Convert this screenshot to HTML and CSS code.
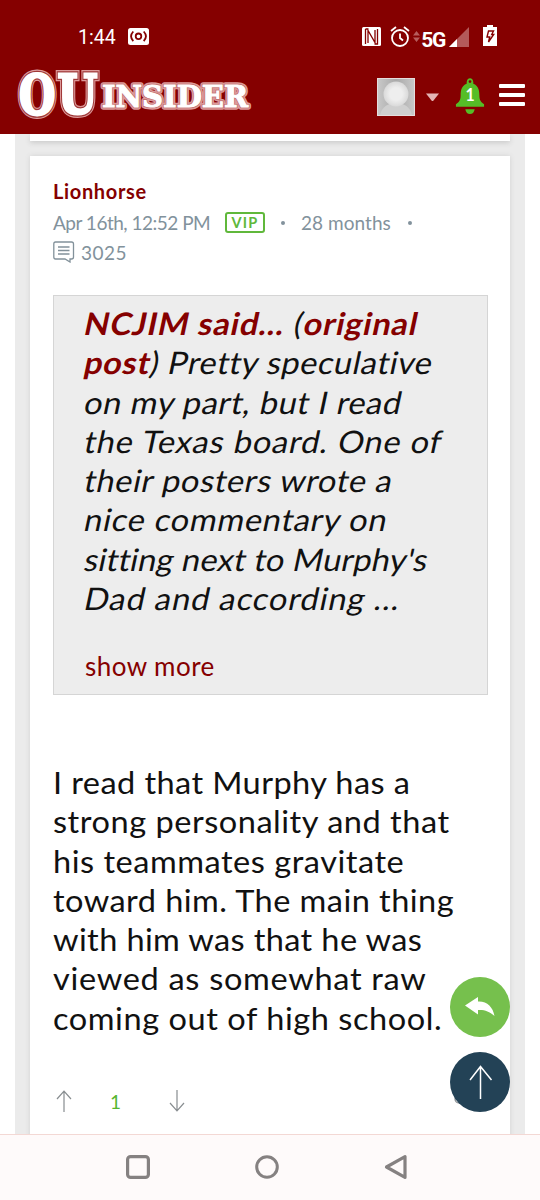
FILE: index.html
```html
<!DOCTYPE html>
<html lang="en">
<head>
<meta charset="utf-8">
<title>OU Insider</title>
<link rel="stylesheet" href="styles.css">
</head>
<body>
<header class="top">
  <div class="status">
    <span class="clock">1:44</span>
    <svg class="rec" width="21" height="17" viewBox="0 0 21 17"><rect width="21" height="17" rx="2.5" fill="#fff"/><g fill="none" stroke="#850000" stroke-width="1.8"><circle cx="10.500" cy="8.300" r="2.800"/><path d="M5.300 3.500Q.8 8.300 5.300 13.100M15.700 3.500Q20.200 8.300 15.700 13.100"/></g></svg>
    <svg class="nfc" width="19" height="19" viewBox="0 0 19 19"><rect width="19" height="19" rx="1.500" fill="#fff"/><path d="M3.500 2V17M6 16V3.500L13 15.500V3M3.500 2H6.500M12.500 17H15.500V2" fill="none" stroke="#850000" stroke-width="1.300"/></svg>
    <svg class="alarm" width="20" height="21" viewBox="0 0 20 21"><g fill="none" stroke="#fff" stroke-width="1.8"><circle cx="10" cy="12" r="8"/><path d="M1 5l5-4M19 5l-5-4M10 7.500V12l3 2.500"/></g></svg>
    <svg class="data" width="7" height="11" viewBox="0 0 7 11"><path d="M0 4.500L3.500 0 7 4.500zM0 6.500h7L3.500 11z" fill="#b65c5c"/></svg>
    <span class="net">5G</span>
    <svg class="signal" width="20" height="20" viewBox="0 0 20 20"><path d="M0 20L20 0V20z" fill="#b45a5a"/><path d="M0 20L8 12V20z" fill="#fff"/></svg>
    <svg class="battery" width="14" height="21" viewBox="0 0 14 21"><path d="M4 0h6v2h4v19H0V2h4z" fill="#fff"/><path d="M5.500 6h5L8.700 9.500h2L5.500 17l1.200-5H4z" fill="none" stroke="#850000" stroke-width="1.400"/></svg>
  </div>
  <div class="bar">
    <svg class="logo" width="236" height="54" viewBox="0 0 236 54">
      <g class="halo"><text class="big" transform="translate(3 48) scale(.76 1)">O</text><text class="big" transform="translate(41.500 48) scale(.83 1)">U</text><text class="small" x="86" y="40.500" textLength="146" lengthAdjust="spacing">INSIDER</text></g>
      <g class="groove" aria-hidden="true"><text class="big" transform="translate(3 48) scale(.76 1)">O</text><text class="big" transform="translate(41.500 48) scale(.83 1)">U</text><text class="small" x="86" y="40.500" textLength="146" lengthAdjust="spacing">INSIDER</text></g>
      <g class="face" aria-hidden="true"><text class="big" transform="translate(3 48) scale(.76 1)">O</text><text class="big" transform="translate(41.500 48) scale(.83 1)">U</text><text class="small" x="86" y="40.500" textLength="146" lengthAdjust="spacing">INSIDER</text></g>
    </svg>
    <svg class="avatar" width="38" height="38" viewBox="0 0 38 38"><defs><radialGradient id="head"><stop offset=".5" stop-color="#eee"/><stop offset="1" stop-color="#d9d9d9"/></radialGradient><linearGradient id="back"><stop stop-color="#c8c8c8"/><stop offset=".5" stop-color="#a9a9a9"/><stop offset="1" stop-color="#c8c8c8"/></linearGradient></defs><rect width="38" height="38" fill="#e5dddd"/><rect x="1" y="1" width="36" height="36" fill="url(#back)"/><path d="M3 37Q6 25 19 25T35 37z" fill="#cfcfcf"/><circle cx="19" cy="16" r="12.500" fill="url(#head)"/></svg>
    <svg class="caret" width="15" height="9" viewBox="0 0 15 9"><path d="M1 .5H14L8.500 7.500Q7.500 8.500 6.500 7.500z" fill="#e3b5b5"/></svg>
    <svg class="bell" width="30" height="37" viewBox="0 0 32 38" preserveAspectRatio="none"><path fill="#55bd27" fill-rule="evenodd" d="M12.500 6C11.500-1.500 20.500-1.500 19.500 6C25 8 26 13 26 18C26 23 28 25 31 27V29.500H1V27C4 25 6 23 6 18C6 13 7 8 12.500 6zM16 2.200A1.500 1.500 0 1 0 16 5.200A1.500 1.500 0 1 0 16 2.200zM11 32H21Q20 37 16 37T11 32z"/><text class="count" x="16" y="24" text-anchor="middle">1</text></svg>
    <div class="menu"><i></i><i></i><i></i></div>
  </div>
</header>
<main class="page">
  <div class="prev"></div>
  <article class="post">
    <div class="author">Lionhorse</div>
    <div class="meta"><span class="date">Apr 16th, 12:52 PM</span><span class="vip">VIP</span><span class="dot d1"></span><span class="age">28 months</span><span class="dot d2"></span></div>
    <div class="meta posts"><svg width="22" height="22" viewBox="0 0 22 22" fill="none" stroke="#82919a" stroke-width="1.300"><path d="M2.500 1H18.500Q20.500 1 20.500 3V16Q20.500 18 18.500 18H17V21L12 18H2.500Q.8 18 .8 16V3Q.8 1 2.500 1zM5 6H16.500M5 9.500H16.500M5 13H16.500"/></svg><span class="total">3025</span></div>
    <blockquote class="quote">
      <div class="line q1"><b>NCJIM said...</b> (<b>original</b></div>
      <div class="line q2"><b>post</b>) Pretty speculative</div>
      <div class="line q3">on my part, but I read</div>
      <div class="line q4">the Texas board. One of</div>
      <div class="line q5">their posters wrote a</div>
      <div class="line q6">nice commentary on</div>
      <div class="line q7">sitting next to Murphy's</div>
      <div class="line q8">Dad and according ...</div>
      <a class="more">show more</a>
    </blockquote>
    <div class="body">
      <div class="line b1">I read that Murphy has a</div>
      <div class="line b2">strong personality and that</div>
      <div class="line b3">his teammates gravitate</div>
      <div class="line b4">toward him. The main thing</div>
      <div class="line b5">with him was that he was</div>
      <div class="line b6">viewed as somewhat raw</div>
      <div class="line b7">coming out of high school.</div>
    </div>
    <div class="votes">
      <svg width="16" height="22" viewBox="0 0 16 22" fill="none" stroke="#888d90" stroke-width="1.200"><path d="M8 22V1M1 9L8 1.200 15 9"/></svg>
      <span class="score">1</span>
      <svg width="16" height="22" viewBox="0 0 16 22" fill="none" stroke="#888d90" stroke-width="1.200"><path d="M8 0V21M1 13L8 20.800 15 13"/></svg>
      <svg class="link" width="12" height="12" viewBox="0 0 12 12" fill="none" stroke="#888d90" stroke-width="1.200"><circle cx="5" cy="5" r="4"/></svg>
    </div>
  </article>
</main>
<div class="floating">
  <svg width="60" height="60" viewBox="0 0 60 60"><circle cx="30" cy="30" r="30" fill="#76c04d"/><path d="M15 28.500L28 20V24.500C37 24 43 30 44.500 39C39 34 34 32.500 28 33V37.500z" fill="#fff"/></svg>
  <svg width="60" height="60" viewBox="0 0 60 60"><circle cx="30" cy="30" r="30" fill="#234256"/><path d="M30.500 47V15M20 28L30.500 14.500 41.500 28" fill="none" stroke="#fff" stroke-width="1.500"/></svg>
</div>
<nav class="nav">
  <svg width="24" height="24" viewBox="0 0 24 24" fill="none" stroke="#858181" stroke-width="3.200"><rect x="1.600" y="1.600" width="20.800" height="20.800" rx="3"/></svg>
  <svg width="24" height="24" viewBox="0 0 24 24" fill="none" stroke="#858181" stroke-width="3"><circle cx="12" cy="12" r="10.300"/></svg>
  <svg width="24" height="26" viewBox="0 0 24 26" fill="none" stroke="#858181" stroke-width="3.200" stroke-linejoin="round"><path d="M21 2.600V23.400L2.500 13z"/></svg>
</nav>
</body>
</html>
```
FILE: styles.css
```css
* { box-sizing: border-box; }
body { margin: 0; width: 540px; height: 1200px; overflow: hidden; display: flex; flex-direction: column; background: #fff; font-family: Lato, sans-serif; position: relative; }
svg { display: block; flex: none; }
.top { height: 134px; background: #850000; flex: none; }
.status { height: 60px; padding: 0 43px 0 78px; display: flex; align-items: flex-start; color: #fff; font-family: Roboto, sans-serif; }
.clock { font-size: 19.500px; line-height: 24px; margin-top: 26px; width: 51px; white-space: nowrap; }
.rec { margin-top: 28px; }
.nfc { margin: 27px 9px 0 213px; }
.alarm { margin: 26px 3px 0 0; }
.data { margin: 31px 1px 0 0; }
.net { font: 700 21px/24px Roboto, sans-serif; margin-top: 28px; width: 28px; letter-spacing: -1.500px; }
.signal { margin: 27px 14px 0 0; }
.battery { margin-top: 25px; }
.bar { height: 74px; display: flex; padding: 6px 15px 0 16px; align-items: flex-start; }
.logo { margin-right: 125px; font-family: "DejaVu Serif", serif; font-weight: 700; overflow: visible; }
.big { font-size: 55px; }
.small { font-size: 29px; }
.halo { stroke: #dc9a9a; stroke-width: 8px; stroke-linejoin: miter; fill: #dc9a9a; }
.halo .small { stroke-width: 5.500px; stroke-linejoin: round; }
.groove { stroke: #a03838; stroke-width: 5.500px; fill: #a03838; }
.groove .small { stroke: #bf6a6a; stroke-width: 2.500px; }
.face { fill: #fff; stroke: #fff; stroke-width: 3px; }
.face .small { stroke-width: 1px; }
.avatar { margin-top: 12px; }
.caret { margin: 27px 15px 0 10px; }
.bell { margin-top: 12px; margin-right: 14px; }
.count { font: 700 17px Lato, sans-serif; fill: #fff; }
.menu { display: grid; gap: 5px; margin-top: 18px; }
.menu i { width: 26px; height: 4px; background: #fff; border-radius: 1px; }
.page { height: 1000px; flex: none; margin: 0 15px; background: #ebebeb; padding: 0 15px; overflow: hidden; }
.prev { height: 7px; margin-bottom: 15px; background: #fff; box-shadow: 0 2px 5px #ccc; }
.post { height: 1000px; background: #fff; padding: 23px 22px 0 23px; box-shadow: 0 0 5px #d2d2d2; }
.author { font-size: 20px; line-height: 24px; font-weight: 700; color: #850000; letter-spacing: .65px; margin-bottom: 7px; }
.meta { display: flex; height: 24px; align-items: center; font-size: 19px; color: #82929c; white-space: nowrap; }
.date { width: 172px; letter-spacing: -.5px; }
.vip { width: 40px; height: 21px; border: 2px solid #60b83b; border-radius: 3px; color: #60b83b; font-size: 14.500px; line-height: 17px; text-align: center; font-weight: 700; letter-spacing: 1.200px; }
.dot { width: 4px; height: 4px; border-radius: 50%; background: #82929c; }
.d1 { margin: 2px 16px 0 16px; }
.age { width: 107px; letter-spacing: .05px; }
.d2 { margin-top: 2px; }
.posts { margin-top: 6px; gap: 6px; }
.total { letter-spacing: .5px; }
.quote { margin: 31px 0 0; width: 435px; height: 400px; border: 1px solid #d5d5d5; background: #ededed; padding: 8px 0 0 31px; }
.line { font-size: 31px; line-height: 39.250px; height: 39.250px; white-space: nowrap; color: #111; font-variant-ligatures: none; transform-origin: 0 50%; transform: scaleX(1.05); }
.quote .line { transform: skewX(-12deg) scaleX(1.05); }
.quote b { color: #850000; font-weight: 700; }
.q1 { letter-spacing: .8px; }
.q2 { letter-spacing: .5px; }
.q3 { letter-spacing: .5px; }
.q4 { letter-spacing: .78px; }
.q5 { letter-spacing: .57px; }
.q6 { letter-spacing: .7px; }
.q7 { letter-spacing: .15px; }
.q8 { letter-spacing: .87px; }
.more { display: block; margin-top: 26px; font-size: 26px; line-height: 44px; color: #850000; letter-spacing: .45px; }
.body { margin-top: 68px; }
.b1 { letter-spacing: .39px; }
.b2 { letter-spacing: .49px; }
.b3 { letter-spacing: .49px; }
.b4 { letter-spacing: .42px; }
.b5 { letter-spacing: .35px; }
.b6 { letter-spacing: .65px; }
.b7 { letter-spacing: .52px; }
.votes { height: 22px; margin: 52px 0 0 3px; display: flex; align-items: flex-start; }
.score { width: 97px; padding-left: 38px; line-height: 24px; font-size: 19px; color: #55b52f; }
.link { margin: 4px 0 0 269px; }
.floating { position: absolute; right: 30px; top: 977px; display: grid; gap: 15px; }
.nav { position: relative; height: 66px; flex: none; border-top: 1px solid #f3d8d4; background: #fefafa; display: flex; align-items: center; padding: 0 0 2px 126px; gap: 105px; }
```
